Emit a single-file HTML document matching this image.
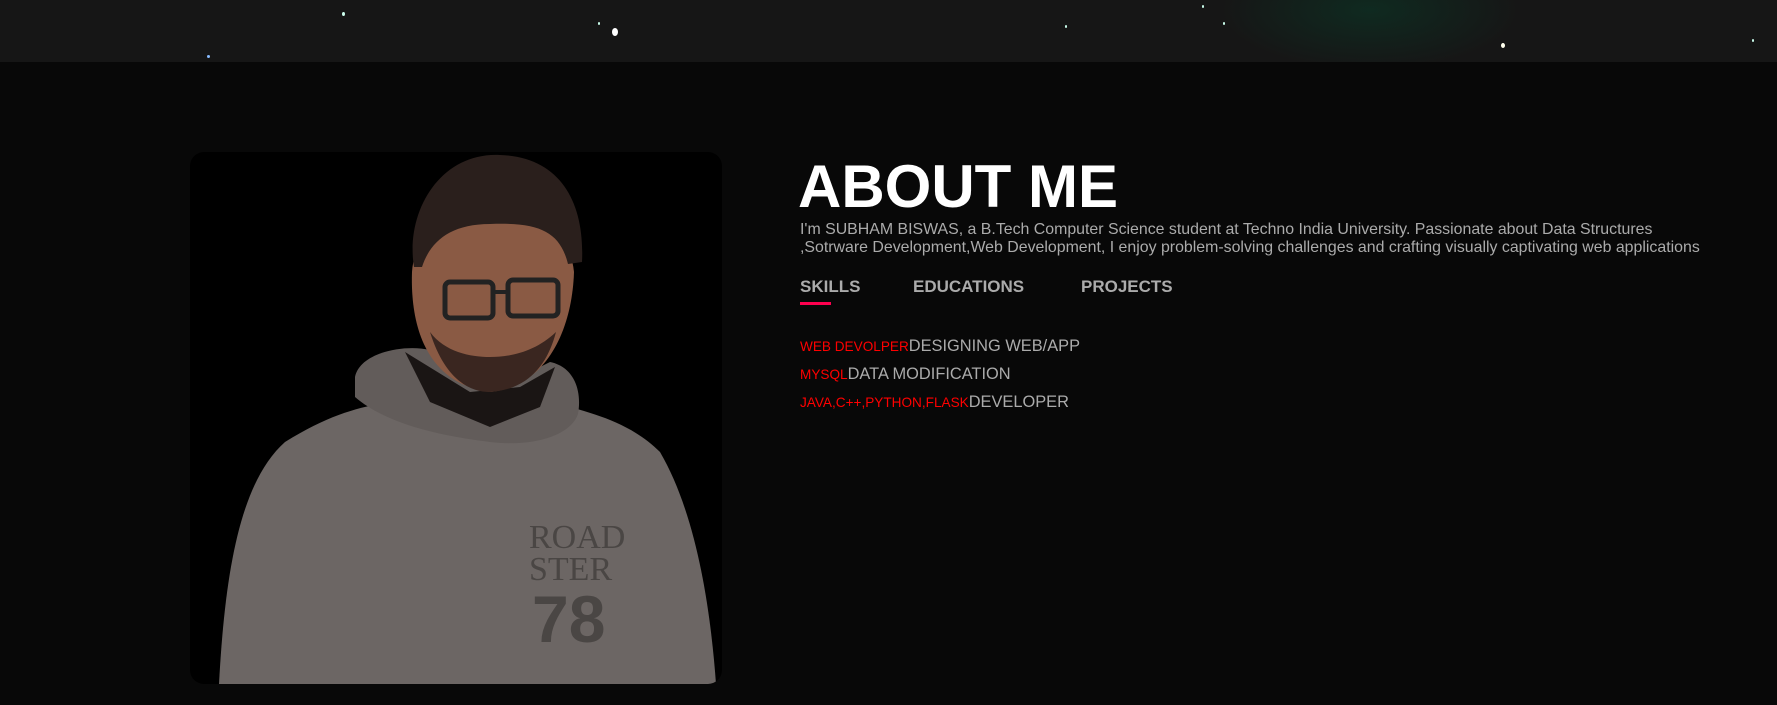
<!DOCTYPE html>
<html><head><meta charset="utf-8"><style>
*{margin:0;padding:0;box-sizing:border-box}
html,body{width:1777px;height:705px;overflow:hidden;background:#080808;font-family:"Liberation Sans",Arial,sans-serif}
.top{position:absolute;left:0;top:0;width:1777px;height:62px;background:radial-gradient(ellipse 150px 60px at 1370px 10px,#0f2a20,transparent),#161616}
.star{position:absolute;border-radius:50%;background:#cfe;}
.photo{position:absolute;left:190px;top:152px;width:532px;height:532px;background:#000;border-radius:14px;overflow:hidden}
h1{position:absolute;left:798px;top:152px;font-size:60px;font-weight:bold;color:#fff;letter-spacing:0}
.p{position:absolute;left:800px;top:221px;width:980px;font-size:15.9px;line-height:18px;color:#ababab}
.tabs{position:absolute;left:800px;top:277px;font-size:17px;font-weight:bold;color:#ababab}
.tabs span{position:absolute;white-space:nowrap}
.ul{position:absolute;left:800px;top:302px;width:31px;height:3px;background:#ff004f}
.sk{position:absolute;left:800px;font-size:16.4px;color:#ababab;white-space:nowrap}
.sk b{font-weight:normal;color:#ff0000;font-size:13.6px}
</style></head><body>
<div class="top">
<div class="star" style="left:612px;top:28px;width:6px;height:8px;background:#fff"></div>
<div class="star" style="left:342px;top:12px;width:3px;height:4px"></div>
<div class="star" style="left:1501px;top:43px;width:4px;height:5px;background:#ffe"></div>
<div class="star" style="left:1065px;top:25px;width:2px;height:3px"></div>
<div class="star" style="left:1202px;top:5px;width:2px;height:3px"></div>
<div class="star" style="left:207px;top:55px;width:3px;height:3px;background:#8bf"></div>
<div class="star" style="left:1223px;top:22px;width:2px;height:3px"></div>
<div class="star" style="left:1752px;top:39px;width:2px;height:3px"></div>
<div class="star" style="left:598px;top:22px;width:2px;height:3px"></div>
</div>
<div class="photo">
<svg width="532" height="532" viewBox="0 0 532 532">
<path d="M29 532 C35 420 50 330 95 290 C140 262 170 255 200 250 L360 250 C400 260 440 270 470 300 C505 360 520 450 526 532 Z" fill="#6c6664"/>
<path d="M165 225 C170 200 215 192 240 198 L300 240 L360 210 C385 215 392 240 388 262 C380 285 340 295 300 290 C260 285 200 275 165 245 Z" fill="#625c5a"/>
<path d="M215 200 L240 250 L300 275 L350 255 L365 215 L330 235 L280 240 Z" fill="#1a1514"/>
<path d="M222 120 C220 180 240 232 300 240 C355 235 382 180 384 120 C380 80 350 70 300 70 C250 70 224 85 222 120 Z" fill="#8a5a44"/>
<path d="M240 180 C255 228 280 240 300 240 C330 238 355 222 366 180 C345 200 320 205 300 205 C280 205 255 200 240 180 Z" fill="#3a2620"/>
<path d="M224 115 C215 60 250 0 310 3 C370 5 395 50 392 110 L378 112 C370 80 350 70 300 72 C260 72 240 90 232 115 Z" fill="#2a1f1c"/>
<rect x="255" y="130" width="48" height="36" rx="5" fill="none" stroke="#222" stroke-width="5"/>
<rect x="318" y="128" width="50" height="36" rx="5" fill="none" stroke="#222" stroke-width="5"/>
<path d="M303 140 L318 140" stroke="#222" stroke-width="4"/>
<text x="339" y="396" font-family="Liberation Serif,serif" font-size="34" fill="#4a4644">ROAD</text>
<text x="339" y="428" font-family="Liberation Serif,serif" font-size="34" fill="#4a4644">STER</text>
<text x="342" y="490" font-family="Liberation Sans,sans-serif" font-weight="bold" font-size="66" fill="#4a4644">78</text>
</svg>
</div>
<h1>ABOUT ME</h1>
<div class="p">I'm SUBHAM BISWAS, a B.Tech Computer Science student at Techno India University. Passionate about Data Structures<br>,Sotrware Development,Web Development, I enjoy problem-solving challenges and crafting visually captivating web applications</div>
<div class="tabs"><span style="left:0">SKILLS</span><span style="left:113px">EDUCATIONS</span><span style="left:281px">PROJECTS</span></div>
<div class="ul"></div>
<div class="sk" style="top:337px"><b>WEB DEVOLPER</b>DESIGNING WEB/APP</div>
<div class="sk" style="top:365px"><b>MYSQL</b>DATA MODIFICATION</div>
<div class="sk" style="top:393px"><b>JAVA,C++,PYTHON,FLASK</b>DEVELOPER</div>
</body></html>
